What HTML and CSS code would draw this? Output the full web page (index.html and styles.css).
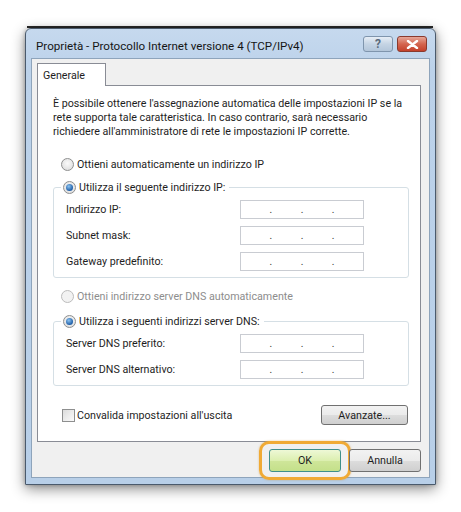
FILE: index.html
```html
<!DOCTYPE html>
<html lang="it">
<head>
<meta charset="utf-8">
<title>Proprietà - Protocollo Internet versione 4 (TCP/IPv4)</title>
<link rel="stylesheet" href="styles.css">
</head>
<body>
<div class="stage">
  <div class="behind"></div>
  <div class="window">
    <div class="titlebar">
      <span class="title">Proprietà - Protocollo Internet versione 4 (TCP/IPv4)</span>
      <div class="caption-btns">
        <span class="cbtn help">?</span>
        <span class="cbtn close"><svg width="13" height="9" viewBox="0 0 13 9"><path d="M2 1 L11 8 M11 1 L2 8" stroke="#fff" stroke-width="2.4" stroke-linecap="round"/></svg></span>
      </div>
    </div>
    <div class="body">
      <div class="tabs"><span class="tab">Generale</span></div>
      <div class="panel">
        <p class="desc">È possibile ottenere l'assegnazione automatica delle impostazioni IP se la rete supporta tale caratteristica. In caso contrario, sarà necessario richiedere all'amministratore di rete le impostazioni IP corrette.</p>
        <label class="opt first"><span class="radio"></span>Ottieni automaticamente un indirizzo IP</label>
        <fieldset class="group g1">
          <legend><label class="opt"><span class="radio on"></span>Utilizza il seguente indirizzo IP:</label></legend>
          <div class="row"><span class="lbl">Indirizzo IP:</span><span class="ip"><i>.</i><i>.</i><i>.</i></span></div>
          <div class="row"><span class="lbl">Subnet mask:</span><span class="ip"><i>.</i><i>.</i><i>.</i></span></div>
          <div class="row"><span class="lbl">Gateway predefinito:</span><span class="ip"><i>.</i><i>.</i><i>.</i></span></div>
        </fieldset>
        <label class="opt disabled third"><span class="radio dis"></span>Ottieni indirizzo server DNS automaticamente</label>
        <fieldset class="group g2">
          <legend><label class="opt"><span class="radio on"></span>Utilizza i seguenti indirizzi server DNS:</label></legend>
          <div class="row"><span class="lbl">Server DNS preferito:</span><span class="ip"><i>.</i><i>.</i><i>.</i></span></div>
          <div class="row"><span class="lbl">Server DNS alternativo:</span><span class="ip"><i>.</i><i>.</i><i>.</i></span></div>
        </fieldset>
        <div class="bottom">
          <label class="opt"><span class="check"></span>Convalida impostazioni all'uscita</label>
          <span class="btn adv">Avanzate...</span>
        </div>
      </div>
      <div class="actions">
        <span class="hl"><span class="btn ok">OK</span></span>
        <span class="btn">Annulla</span>
      </div>
    </div>
  </div>
</div>
</body>
</html>
```
FILE: styles.css
```css
* { box-sizing: border-box; }
html, body { margin: 0; padding: 0; background: #fff; }
body { font-family: Roboto, "Liberation Sans", sans-serif; font-size: 10.7px; color: #1e1e1e; }

.stage { padding: 26px 0 0 25px; width: 461px; height: 512px; }
.behind { width: 406px; height: 2px; margin-left: 2px; background: #2a2a2a; }

.window {
  width: 411px; height: 457px;
  background: linear-gradient(#c6d9ee, #bcd2ea 40px, #b8cfe8);
  border: 1px solid #4a5a6c;
  border-radius: 6px 6px 0 0;
  box-shadow: 0 4px 14px rgba(0,0,0,0.45), 0 0 4px rgba(0,0,0,0.25);
  display: flex; flex-direction: column;
}
.titlebar { height: 29px; display: flex; align-items: center; justify-content: space-between; padding: 0 8px 0 10px; }
.title { font-size: 11.6px; color: #151515; margin-top: 4px; }
.caption-btns { display: flex; gap: 4px; margin-top: 1px; }
.cbtn { width: 30px; height: 16px; border-radius: 3px; display: flex; align-items: center; justify-content: center; }
.help { background: linear-gradient(#e7eef6, #c5d4e4 50%, #b3c6da); border: 1px solid #7f95ad; color: #5a6a7c; font-size: 12px; font-weight: bold; }
.close { background: linear-gradient(#e6a798, #d4654f 50%, #c3412b); border: 1px solid #8a3a2e; }

.body {
  flex: 1; margin: 0 5px 6px 5px;
  background: #f0f0f0;
  border: 1px solid #8ea4bb;
  padding: 4px 8px 0 5px;
  display: flex; flex-direction: column;
}
.tabs { display: flex; height: 22px; }
.tab { width: 69px; background: #fff; border: 1px solid #898c95; border-bottom: none; display: flex; align-items: center; padding-left: 5px; position: relative; z-index: 1; margin-bottom: -1px; height: 23px; }
.panel { background: #fff; border: 1px solid #898c95; height: 357px; display: flex; flex-direction: column; }

.desc { margin: 11px 4px 0 15px; line-height: 14px; }

.opt { display: flex; align-items: center; height: 16px; }
.opt.first { margin: 17px 0 0 23px; }
.opt.third { margin: 10px 0 0 23px; }
.opt.disabled { color: #8d8d8d; }

.radio { width: 13px; height: 13px; border-radius: 50%; border: 1px solid #8e8f8f; background: radial-gradient(circle at 50% 40%, #fafafa, #d8d8d8); margin-right: 3px; position: relative; flex: none; }
.radio.on::after { content: ""; position: absolute; left: 2px; top: 2px; width: 7px; height: 7px; border-radius: 50%; background: radial-gradient(circle at 40% 35%, #8cc3f0, #1f5ea8 70%); }
.radio.dis { border-color: #bcbcbc; background: #f2f2f2; }
.check { width: 13px; height: 13px; border: 1px solid #8e8f8f; background: linear-gradient(135deg, #dcdcdc, #fbfbfb); margin-right: 2px; flex: none; }

.group { margin: 7px 11px 0 15px; padding: 5px 44px 6px 12px; border: 1px solid #d5dfe5; border-radius: 3px; display: flex; flex-direction: column; gap: 7px; }
.g2 { margin-top: 9px; }
.group legend { padding: 0 4px 0 2px; margin-left: -5px; }
.row { display: flex; align-items: center; justify-content: space-between; height: 19px; }
.ip { width: 124px; height: 19px; border: 1px solid #c9ccd2; background: #fff; display: flex; justify-content: space-evenly; align-items: center; }
.ip i { font-style: normal; color: #333; font-size: 10px; line-height: 1; }

.bottom { display: flex; justify-content: space-between; align-items: center; margin: 19px 12px 0 24px; }
.bottom .opt { margin-top: 1px; }

.btn { display: flex; align-items: center; justify-content: center; height: 20px; border: 1px solid #707070; border-radius: 3px; background: linear-gradient(#f2f2f2, #ebebeb 50%, #dddddd 51%, #cfcfcf); color: #1e1e1e; }
.adv { width: 87px; }
.actions { display: flex; justify-content: flex-end; gap: 8px; margin-top: 7px; }
.actions .btn { width: 72px; height: 23px; }
.hl { border: 3px solid #f0aa35; border-radius: 10px; padding: 5px 7px; margin: -8px -10px -7px -10px; display: flex; box-shadow: 0 0 2px rgba(200,130,20,0.5); }
.btn.ok { background: linear-gradient(#eef8d6, #dcefb0 50%, #cfe69a 51%, #c4e08a); border-color: #3f8f8a; }
```
